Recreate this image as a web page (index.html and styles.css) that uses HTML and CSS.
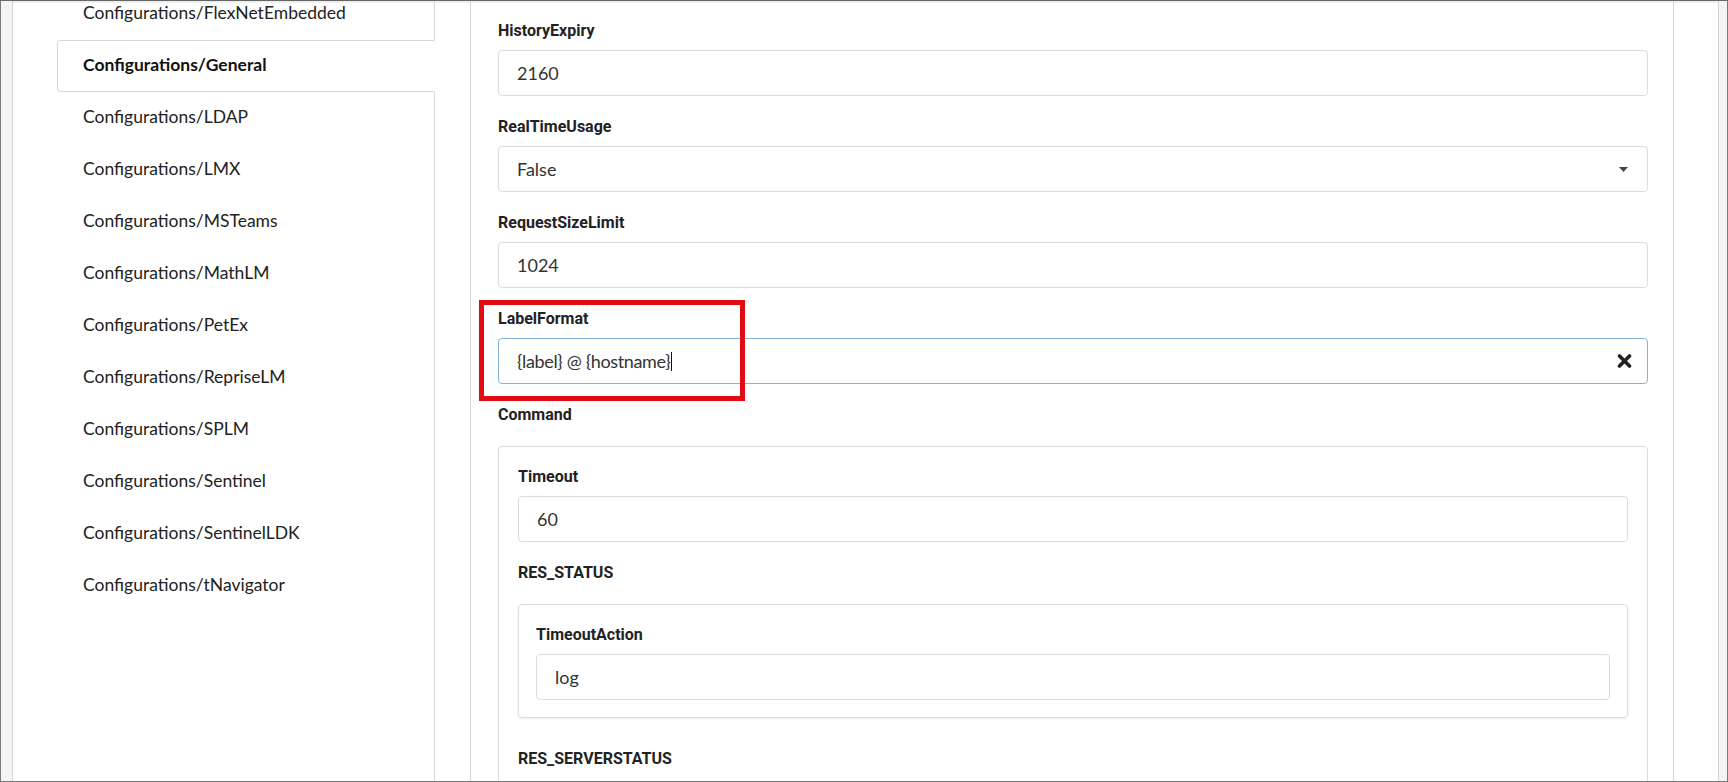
FILE: index.html
```html
<!DOCTYPE html>
<html lang="en">
<head>
    <meta charset="UTF-8">
    <meta name="viewport" content="width=device-width, initial-scale=1.0">
    <title>Configurations/General</title>
    <link rel="stylesheet" href="styles.css">
</head>
<body>
    <div class="page">
        <div class="sidebar">
            <ul class="nav">
                <li>Configurations/FlexNetEmbedded</li>
                <li class="active">Configurations/General</li>
                <li>Configurations/LDAP</li>
                <li>Configurations/LMX</li>
                <li>Configurations/MSTeams</li>
                <li>Configurations/MathLM</li>
                <li>Configurations/PetEx</li>
                <li>Configurations/RepriseLM</li>
                <li>Configurations/SPLM</li>
                <li>Configurations/Sentinel</li>
                <li>Configurations/SentinelLDK</li>
                <li>Configurations/tNavigator</li>
            </ul>
        </div>

        <div class="panel">
            <div class="group">
                <label>HistoryExpiry</label>
                <div class="field">2160</div>
            </div>
            <div class="group">
                <label>RealTimeUsage</label>
                <div class="field select">
                    <span>False</span>
                    <svg class="caret-down" width="9" height="5" viewBox="0 0 9 5"><path d="M0 0h9L4.5 5z" fill="#444"/></svg>
                </div>
            </div>
            <div class="group">
                <label>RequestSizeLimit</label>
                <div class="field">1024</div>
            </div>
            <div class="group marked">
                <span class="mark"></span>
                <label>LabelFormat</label>
                <div class="field focus">
                    <span class="value">{label} @ {hostname}</span><span class="cursor"></span>
                    <svg class="clear" width="15" height="14" viewBox="0 0 15 14">
                        <path d="M2.5 2l10 10M12.5 2l-10 10" stroke="#222" stroke-width="3.6" stroke-linecap="round"/>
                    </svg>
                </div>
            </div>

            <label class="section-label">Command</label>
            <div class="box">
                <div class="group">
                    <label>Timeout</label>
                    <div class="field">60</div>
                </div>
                <label class="section-label">RES_STATUS</label>
                <div class="box inner">
                    <div class="group">
                        <label>TimeoutAction</label>
                        <div class="field">log</div>
                    </div>
                </div>
                <label class="section-label">RES_SERVERSTATUS</label>
            </div>
        </div>
    </div>
</body>
</html>
```

FILE: styles.css
```css
body {
    margin: 0;
    height: 782px;
    box-sizing: border-box;
    border: 1px solid #7a7a7a;
    border-top-color: #666;
    background-color: #f3f4f6;
    overflow: hidden;
    font-family: Lato, "Open Sans", sans-serif;
    color: #222;
}
.page {
    display: flex;
    height: 100%;
    margin: 0 8px 0 11px;
    background-color: #fff;
    border-left: 1px solid #d4d4d4;
    border-right: 1px solid #d4d4d4;
    box-shadow: inset 0 3px 3px -2px rgba(0, 0, 0, 0.12);
}

/* left tabs */
.sidebar {
    display: flex;
    padding-left: 44px;
}
.nav {
    list-style: none;
    margin: -13px 0 0;
    padding: 0;
    width: 378px;
    box-sizing: border-box;
    border-right: 1px solid #d8d8d8;
}
.nav li {
    padding: 13px 26px 15px 25px;
    border: 1px solid transparent;
    font-size: 17.5px;
    line-height: 22px;
    color: #222;
}
.nav li.active {
    margin-right: -1px;
    border-color: #d8d8d8;
    border-right-color: #fff;
    border-radius: 4px 0 0 4px;
    background-color: #fff;
    font-weight: bold;
    color: #111;
}

/* settings panel */
.panel {
    flex: 1;
    margin: 0 44px 0 35px;
    padding: 20px 25px 0 27px;
    border-left: 1px solid #d4d4d4;
    border-right: 1px solid #d4d4d4;
}
.group {
    margin-bottom: 21px;
}
.group:last-child {
    margin-bottom: 0;
}
label {
    display: block;
    margin-bottom: 9px;
    font: 700 16px/20px Roboto, sans-serif;
    color: #222;
}
label.section-label {
    margin-bottom: 21px;
}
.field {
    display: flex;
    align-items: center;
    height: 46px;
    box-sizing: border-box;
    padding: 0 18px;
    border: 1px solid #dcdcdc;
    border-radius: 4px;
    font-size: 18px;
    color: #333;
}
.field.focus {
    border-color: #80b4de;
}
.value {
    letter-spacing: -0.35px;
}
.caret-down {
    margin-left: auto;
    margin-right: 1px;
}
.cursor {
    width: 1px;
    height: 19px;
    margin-left: 1px;
    background-color: #111;
}
.clear {
    margin-left: auto;
    margin-right: -3px;
}
.box {
    margin-bottom: 31px;
    padding: 20px 19px 17px;
    border: 1px solid #dcdcdc;
    border-radius: 4px;
}
.box.inner {
    padding: 20px 17px 17px;
    box-shadow: 0 1px 3px rgba(0, 0, 0, 0.07);
}

/* red highlight round the LabelFormat field */
.marked {
    position: relative;
}
.mark {
    position: absolute;
    top: -9px;
    left: -19px;
    width: 266px;
    height: 101px;
    box-sizing: border-box;
    border: 5px solid #e30b12;
}
```
